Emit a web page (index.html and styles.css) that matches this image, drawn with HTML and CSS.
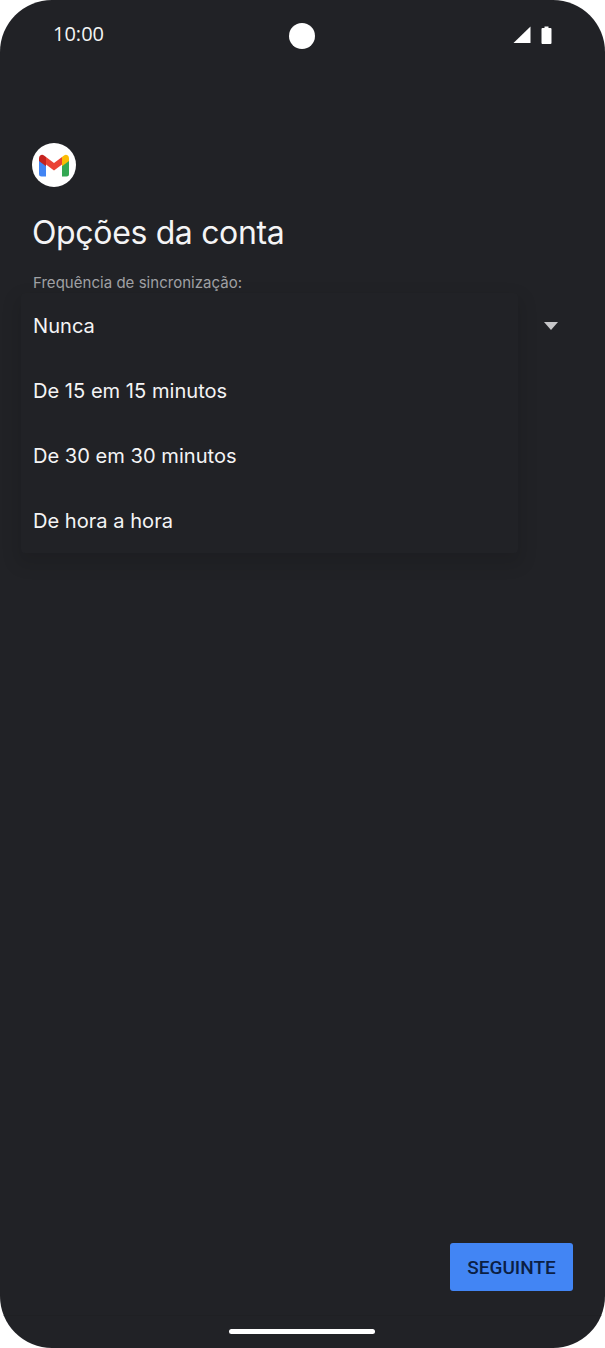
FILE: index.html
```html
<!DOCTYPE html>
<html lang="pt">
<head>
    <meta charset="UTF-8">
    <meta name="viewport" content="width=device-width, initial-scale=1.0">
    <title>Opções da conta</title>
    <link rel="stylesheet" href="styles.css">
</head>
<body>
    <div class="phone">
        <!-- Status bar -->
        <div class="status-bar">
            <span class="clock">10:00</span>
            <span class="camera"></span>
            <div class="status-icons">
                <svg class="signal" width="18" height="17" viewBox="0 0 18 17"><path d="M17.500 0.500V17H0.500Z"/></svg>
                <svg class="battery" width="11" height="18" viewBox="0 0 11 18"><path d="M3.500 0.500h4v1.500h2a1 1 0 0 1 1 1V17a1 1 0 0 1-1 1h-8a1 1 0 0 1-1-1V3a1 1 0 0 1 1-1h2z"/></svg>
            </div>
        </div>

        <div class="content">
            <div class="logo">
                <svg width="30" height="23" viewBox="0 0 30 23">
                    <path fill="#4285f4" d="M0 5v15a2.500 2.500 0 0 0 2.500 2.500H7V10.500z"/>
                    <path fill="#34a853" d="M23 10.500v12h4.500A2.500 2.500 0 0 0 30 20V5z"/>
                    <path fill="#ea4335" d="M7 10.500 15 16.500 23 10.500V3L15 9 7 3z"/>
                    <path fill="#c5221f" d="M0 4.500V7L7 12.300V3L5 1.500C3 0 0 1.200 0 4.500z"/>
                    <path fill="#fbbc04" d="M23 3v9.300L30 7V4.500C30 1.200 27 0 25 1.500z"/>
                </svg>
            </div>
            <h1>Opções da conta</h1>
            <div class="field-label">Frequência de sincronização:</div>
            <div class="spinner">
                <span class="spinner-arrow"></span>
                <div class="dropdown">
                    <div class="dropdown-item">Nunca</div>
                    <div class="dropdown-item">De 15 em 15 minutos</div>
                    <div class="dropdown-item">De 30 em 30 minutos</div>
                    <div class="dropdown-item">De hora a hora</div>
                </div>
            </div>
        </div>

        <div class="actions">
            <button class="next-btn">SEGUINTE</button>
        </div>

        <!-- Gesture bar -->
        <div class="nav-bar">
            <span class="home-pill"></span>
        </div>
    </div>
</body>
</html>
```

FILE: styles.css
```css
/* Base styles */
html, body {
    margin: 0;
    background: #ffffff;
}

body {
    font-family: Inter, "Noto Sans", sans-serif;
    color: #f1f1f2;
}

.phone {
    width: 605px;
    height: 1348px;
    background: #212226;
    border-radius: 52px;
    display: flex;
    flex-direction: column;
    overflow: hidden;
}

/* Status bar */
.status-bar {
    height: 72px;
    flex-shrink: 0;
    padding: 0 53px;
    display: flex;
    align-items: center;
    justify-content: space-between;
}

.clock {
    width: 69px;
    margin-bottom: 5px;
    font-family: "Open Sans", sans-serif;
    font-size: 20px;
    color: #f4f4f4;
}

.camera {
    width: 26px;
    height: 26px;
    border-radius: 50%;
    background: #ffffff;
}

.status-icons {
    width: 70px;
    margin-bottom: 3px;
    display: flex;
    align-items: center;
    justify-content: flex-end;
    gap: 10px;
}

.status-icons svg {
    fill: #ffffff;
}

/* Main content */
.content {
    flex: 1;
    padding: 71px 32px 0 32px;
}

.logo {
    width: 44px;
    height: 44px;
    border-radius: 50%;
    background: #ffffff;
    display: flex;
    align-items: center;
    justify-content: center;
}

h1 {
    margin: 24px 0 0 0;
    font-size: 32px;
    line-height: 44px;
    font-weight: 400;
    letter-spacing: -0.35px;
    color: #f4f4f5;
}

.field-label {
    margin-top: 18px;
    padding-left: 1px;
    font-size: 15px;
    line-height: 20px;
    letter-spacing: 0.03px;
    color: #a0a1a5;
}

/* Spinner + open menu */
.spinner {
    position: relative;
    height: 50px;
}

.spinner-arrow {
    position: absolute;
    top: 29px;
    right: 15px;
    width: 0;
    height: 0;
    border-left: 7px solid transparent;
    border-right: 7px solid transparent;
    border-top: 8px solid #c6c6c8;
}

.dropdown {
    position: absolute;
    top: 0;
    left: -11px;
    width: 497px;
    padding: 0;
    background: #212226;
    border-radius: 4px;
    box-shadow: 0 8px 16px 5px rgba(0, 0, 0, 0.1);
}

.dropdown-item {
    height: 65px;
    padding-left: 12px;
    display: flex;
    align-items: center;
    font-size: 20.1px;
    color: #f4f4f5;
}

/* Bottom button */
.actions {
    padding: 0 32px 24px 0;
    display: flex;
    justify-content: flex-end;
}

.next-btn {
    width: 123px;
    height: 48px;
    padding: 0;
    border: none;
    border-radius: 3px;
    background: #4285f4;
    color: #0b1f45;
    font-family: Roboto, sans-serif;
    font-size: 19px;
    font-weight: 500;
    cursor: pointer;
}

.nav-bar {
    height: 33px;
    flex-shrink: 0;
    border-top: 1px solid #1f2023;
    display: flex;
    justify-content: center;
    padding: 13px 1px 0 0;
    box-sizing: border-box;
}

.home-pill {
    width: 146px;
    height: 5px;
    border-radius: 3px;
    background: #ffffff;
}
```
